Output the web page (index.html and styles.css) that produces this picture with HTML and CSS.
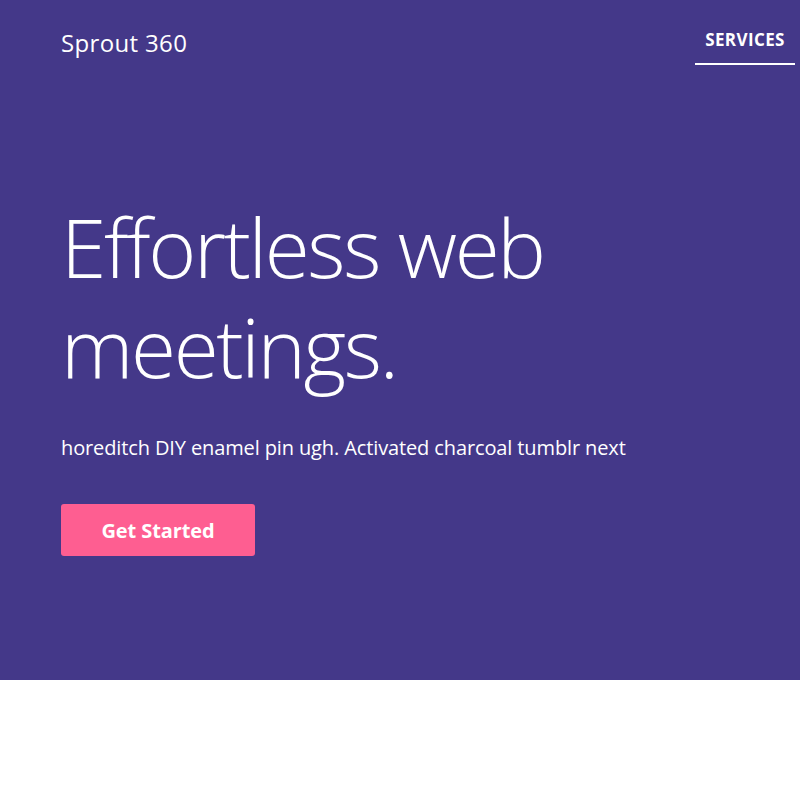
FILE: index.html
```html
<!DOCTYPE html>
<html>
<head>
<meta charset="utf-8">
<link rel="stylesheet" href="styles.css">
</head>
<body>
<section class="hero">
  <header class="topbar">
    <div class="logo">Sprout 360</div>
    <nav class="nav"><a class="nav-link" href="#">SERVICES</a></nav>
  </header>
  <div class="hero-body">
    <h1 class="title">Effortless web meetings.</h1>
    <p class="lead">horeditch DIY enamel pin ugh. Activated charcoal tumblr next</p>
    <a class="cta" href="#">Get Started</a>
  </div>
</section>
</body>
</html>
```
FILE: styles.css
```css
* { box-sizing: border-box; }
html, body { margin: 0; padding: 0; background: #fff; }
body { font-family: "Open Sans", "Noto Sans", sans-serif; color: #fff; }
.hero { background: #443889; height: 680px; padding: 0 0 0 61px; }
.topbar { display: flex; justify-content: space-between; align-items: flex-start; height: 66px; }
.logo { font-size: 24px; padding-top: 28px; line-height: 30px; letter-spacing: 0.35px; }
.nav { display: flex; padding-right: 5px; }
.nav-link { color: #fff; text-decoration: none; font-weight: 700; font-size: 17px; letter-spacing: 0.4px; padding: 30px 0 13px; width: 100px; text-align: center; border-bottom: 2px solid #fff; line-height: 20px; }
.hero-body { padding-top: 130px; }
.title { margin: 0; font-weight: 300; font-size: 82px; line-height: 100px; letter-spacing: -2.4px; width: 560px; }
.lead { margin: 38px 0 0; font-size: 20px; line-height: 28px; letter-spacing: -0.12px; }
.cta { display: inline-flex; align-items: center; justify-content: center; margin-top: 42px; width: 194px; height: 52px; background: #fe5e91; color: #fff; text-decoration: none; font-weight: 700; font-size: 20px; border-radius: 3px; letter-spacing: -0.1px; }
```
